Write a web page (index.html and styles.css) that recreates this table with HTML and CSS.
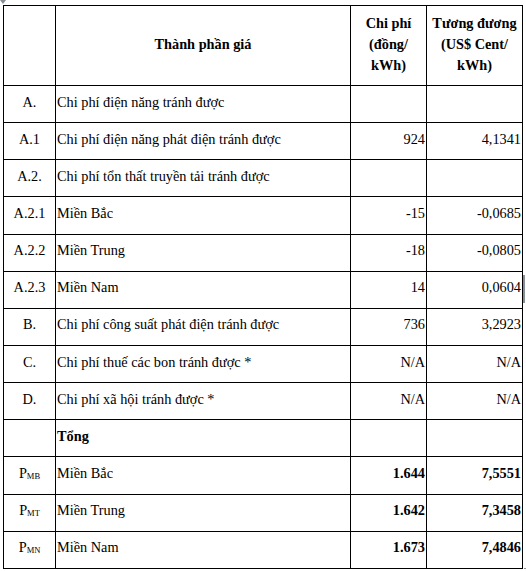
FILE: index.html
```html
<!DOCTYPE html>
<html lang="vi">
<head>
<meta charset="utf-8">
<title>Thành phần giá</title>
<link rel="stylesheet" href="styles.css">
</head>
<body>
<div class="page">
  <span class="move-handle"></span>
  <table class="cost-table">
    <colgroup>
      <col class="c-code">
      <col class="c-name">
      <col class="c-cost">
      <col class="c-usd">
    </colgroup>
    <thead>
      <tr class="head-row">
        <th></th>
        <th class="head-name">Thành phần giá</th>
        <th>Chi phí<br>(đồng/<br>kWh)</th>
        <th>Tương đương<br>(US$ Cent/<br>kWh)</th>
      </tr>
    </thead>
    <tbody>
      <tr><td class="code">A.</td><td>Chi phí điện năng tránh được</td><td></td><td></td></tr>
      <tr><td class="code">A.1</td><td>Chi phí điện năng phát điện tránh được</td><td class="num">924</td><td class="num">4,1341</td></tr>
      <tr><td class="code">A.2.</td><td>Chi phí tổn thất truyền tải tránh được</td><td></td><td></td></tr>
      <tr><td class="code">A.2.1</td><td>Miền Bắc</td><td class="num">-15</td><td class="num">-0,0685</td></tr>
      <tr><td class="code">A.2.2</td><td>Miền Trung</td><td class="num">-18</td><td class="num">-0,0805</td></tr>
      <tr><td class="code">A.2.3</td><td>Miền Nam</td><td class="num">14</td><td class="num">0,0604</td></tr>
      <tr><td class="code">B.</td><td>Chi phí công suất phát điện tránh được</td><td class="num">736</td><td class="num">3,2923</td></tr>
      <tr><td class="code">C.</td><td>Chi phí thuế các bon tránh được *</td><td class="num">N/A</td><td class="num">N/A</td></tr>
      <tr><td class="code">D.</td><td>Chi phí xã hội tránh được *</td><td class="num">N/A</td><td class="num">N/A</td></tr>
      <tr><td class="code"></td><td class="bold">Tổng</td><td></td><td></td></tr>
      <tr><td class="code">P<sub>MB</sub></td><td>Miền Bắc</td><td class="num bold">1.644</td><td class="num bold">7,5551</td></tr>
      <tr><td class="code">P<sub>MT</sub></td><td>Miền Trung</td><td class="num bold">1.642</td><td class="num bold">7,3458</td></tr>
      <tr><td class="code">P<sub>MN</sub></td><td>Miền Nam</td><td class="num bold">1.673</td><td class="num bold">7,4846</td></tr>
    </tbody>
  </table>
  <span class="resize-handle"></span>
  <span class="bottom-handle"></span>
  <span class="corner-handle"></span>
</div>
</body>
</html>
```

FILE: styles.css
```css
html, body {
  margin: 0;
  padding: 0;
  background: #ffffff;
}

.page {
  position: relative;
  padding: 5px 0 0 3px;
  font-family: "Liberation Serif", "Times New Roman", serif;
  font-size: 14.3px;
  color: #000000;
}

.cost-table {
  border-collapse: collapse;
  table-layout: fixed;
  width: 519px;
}

.c-code { width: 52px; }
.c-name { width: 295px; }
.c-cost { width: 76px; }
.c-usd { width: 96px; }

.cost-table th,
.cost-table td {
  border: 1px solid #000000;
  padding: 0 1px 4px 1px;
  height: 37.15px;
  box-sizing: border-box;
  vertical-align: middle;
  white-space: nowrap;
  overflow: hidden;
}

.head-row th {
  height: 80px;
  font-weight: bold;
  text-align: center;
  line-height: 21px;
  padding: 0 1px 2px 1px;
}

.code {
  text-align: center;
}

.num {
  text-align: right;
}

.bold {
  font-weight: bold;
}

sub {
  font-size: 8.5px;
  vertical-align: -1px;
  line-height: 0;
}

.move-handle {
  position: absolute;
  left: 0;
  top: 0;
  width: 0;
  height: 0;
  border-left: 3px solid transparent;
  border-right: 3px solid transparent;
  border-top: 4px solid #8a8f96;
}

.resize-handle {
  position: absolute;
  left: 523px;
  top: 275px;
  width: 2px;
  height: 28px;
  background: #8a8f96;
}

.bottom-handle {
  position: absolute;
  left: 245px;
  top: 569px;
  width: 34px;
  height: 2px;
  background: #8a8f96;
}

.corner-handle {
  position: absolute;
  left: 524px;
  top: 568px;
  width: 2px;
  height: 1px;
  background: #8a8f96;
}
```
